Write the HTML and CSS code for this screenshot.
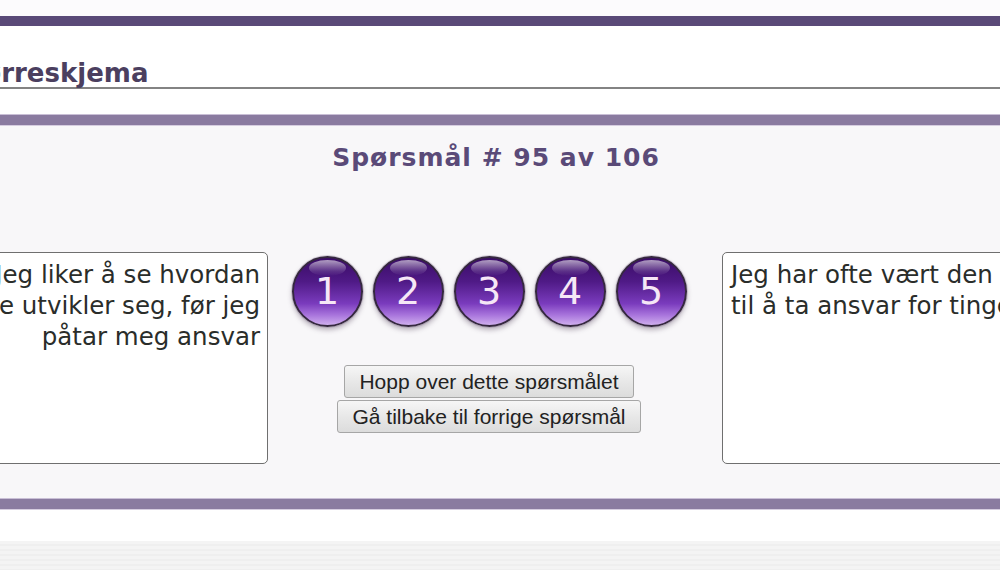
FILE: index.html
```html
<!DOCTYPE html>
<html lang="no">
<head>
<meta charset="utf-8">
<title>Spørreskjema</title>
<link rel="stylesheet" href="styles.css">
</head>
<body>
<div class="top-strip"></div>
<div class="band band-dark"></div>
<header class="header">
  <h1 class="header-title">Spørreskjema</h1>
</header>
<div class="band band-light"></div>
<main class="panel">
  <h2 class="question-title">Spørsmål # 95 av 106</h2>
  <div class="question-row">
    <div class="statement statement-left">Jeg liker å se hvordan<br>tingene utvikler seg, før jeg<br>påtar meg ansvar</div>
    <div class="answer-col">
      <div class="scale">
        <button class="orb" type="button">1</button>
        <button class="orb" type="button">2</button>
        <button class="orb" type="button">3</button>
        <button class="orb" type="button">4</button>
        <button class="orb" type="button">5</button>
      </div>
      <div class="actions">
        <button class="btn" type="button">Hopp over dette spørsmålet</button>
        <button class="btn" type="button">Gå tilbake til forrige spørsmål</button>
      </div>
    </div>
    <div class="statement statement-right">Jeg har ofte vært den første<br>til å ta ansvar for tingene</div>
  </div>
</main>
<div class="band band-light"></div>
<div class="after-space"></div>
<div class="footer-stripes"></div>
</body>
</html>
```
FILE: styles.css
```css
html, body {
  margin: 0;
  padding: 0;
}
body {
  width: 1000px;
  height: 570px;
  overflow: hidden;
  background: #ffffff;
  font-family: "DejaVu Sans", Verdana, sans-serif;
}
.top-strip {
  height: 16px;
  background: #fcfbfd;
}
.band {
  height: 10px;
}
.band-dark {
  background: #5a4a78;
}
.band-light {
  background: #8a7ba0;
  box-shadow: 0 -1px 0 #c9bfd6, 0 1px 0 #d6cde0;
  position: relative;
}
.header {
  background: #ffffff;
  padding-top: 33px;
  padding-bottom: 26px;
}
.header-title {
  margin: 0 0 0 -54px;
  font-size: 26px;
  line-height: 28px;
  font-weight: bold;
  color: #4b3f5f;
  border-bottom: 2px solid #838383;
  white-space: nowrap;
}
.panel {
  background: #f8f7f9;
  margin-left: -40px;
  width: 1072px;
  padding: 18px 0 35px;
}
.question-title {
  margin: 0;
  text-align: center;
  font-size: 25px;
  line-height: 30px;
  letter-spacing: 1px;
  font-weight: bold;
  color: #5a4a78;
}
.question-row {
  display: flex;
  margin-top: 79px;
  margin-left: -72px;
  height: 212px;
}
.statement {
  box-sizing: border-box;
  height: 212px;
  flex: none;
  background: #ffffff;
  border: 1px solid #6f6f6f;
  border-radius: 5px;
  padding: 6px 7px;
  font-size: 24.5px;
  line-height: 31px;
  color: #2a2d2a;
  white-space: nowrap;
  overflow: hidden;
}
.statement-left {
  width: 380px;
  text-align: right;
}
.statement-right {
  width: 420px;
  text-align: left;
  margin-left: 12px;
  padding-left: 8px;
}
.answer-col {
  width: 442px;
  flex: none;
  display: flex;
  flex-direction: column;
  align-items: center;
}
.scale {
  display: flex;
  gap: 10px;
  margin-top: 4px;
}
.orb {
  position: relative;
  box-sizing: border-box;
  width: 71px;
  height: 71px;
  padding: 0;
  border-radius: 50%;
  border: 2px solid #35283f;
  background: linear-gradient(to bottom, #3a0c66 0%, #4f1a86 35%, #7a3bbd 68%, #a874dc 85%, #cfaeee 100%);
  box-shadow: 0 0 0 1px rgba(120, 100, 130, 0.25), 0 3px 5px rgba(60, 40, 70, 0.35);
  color: #f6e7f6;
  font-family: "DejaVu Sans", Verdana, sans-serif;
  font-size: 38px;
  line-height: 67px;
  text-align: center;
  cursor: pointer;
  overflow: hidden;
}
.orb::before {
  content: "";
  position: absolute;
  left: 15px;
  right: 15px;
  top: 2px;
  height: 16px;
  border-radius: 50%;
  background: linear-gradient(to bottom, rgba(255, 255, 255, 0.6) 0%, rgba(255, 255, 255, 0.12) 70%, rgba(255, 255, 255, 0) 100%);
}
.actions {
  margin-top: 38px;
  display: flex;
  flex-direction: column;
  align-items: center;
  gap: 2px;
}
.btn {
  box-sizing: border-box;
  height: 33px;
  padding: 0 14px;
  font-family: "Liberation Sans", Arial, sans-serif;
  font-size: 21px;
  color: #222222;
  background: linear-gradient(to bottom, #f6f6f6 0%, #e8e8e8 50%, #dcdcdc 100%);
  border: 1px solid #a6a6a6;
  border-radius: 3px;
  cursor: pointer;
}
.after-space {
  height: 32px;
  background: #ffffff;
}
.footer-stripes {
  height: 40px;
  background: repeating-linear-gradient(to bottom, #f4f4f4 0px, #f4f4f4 3px, #efefef 3px, #efefef 5px);
}
```
